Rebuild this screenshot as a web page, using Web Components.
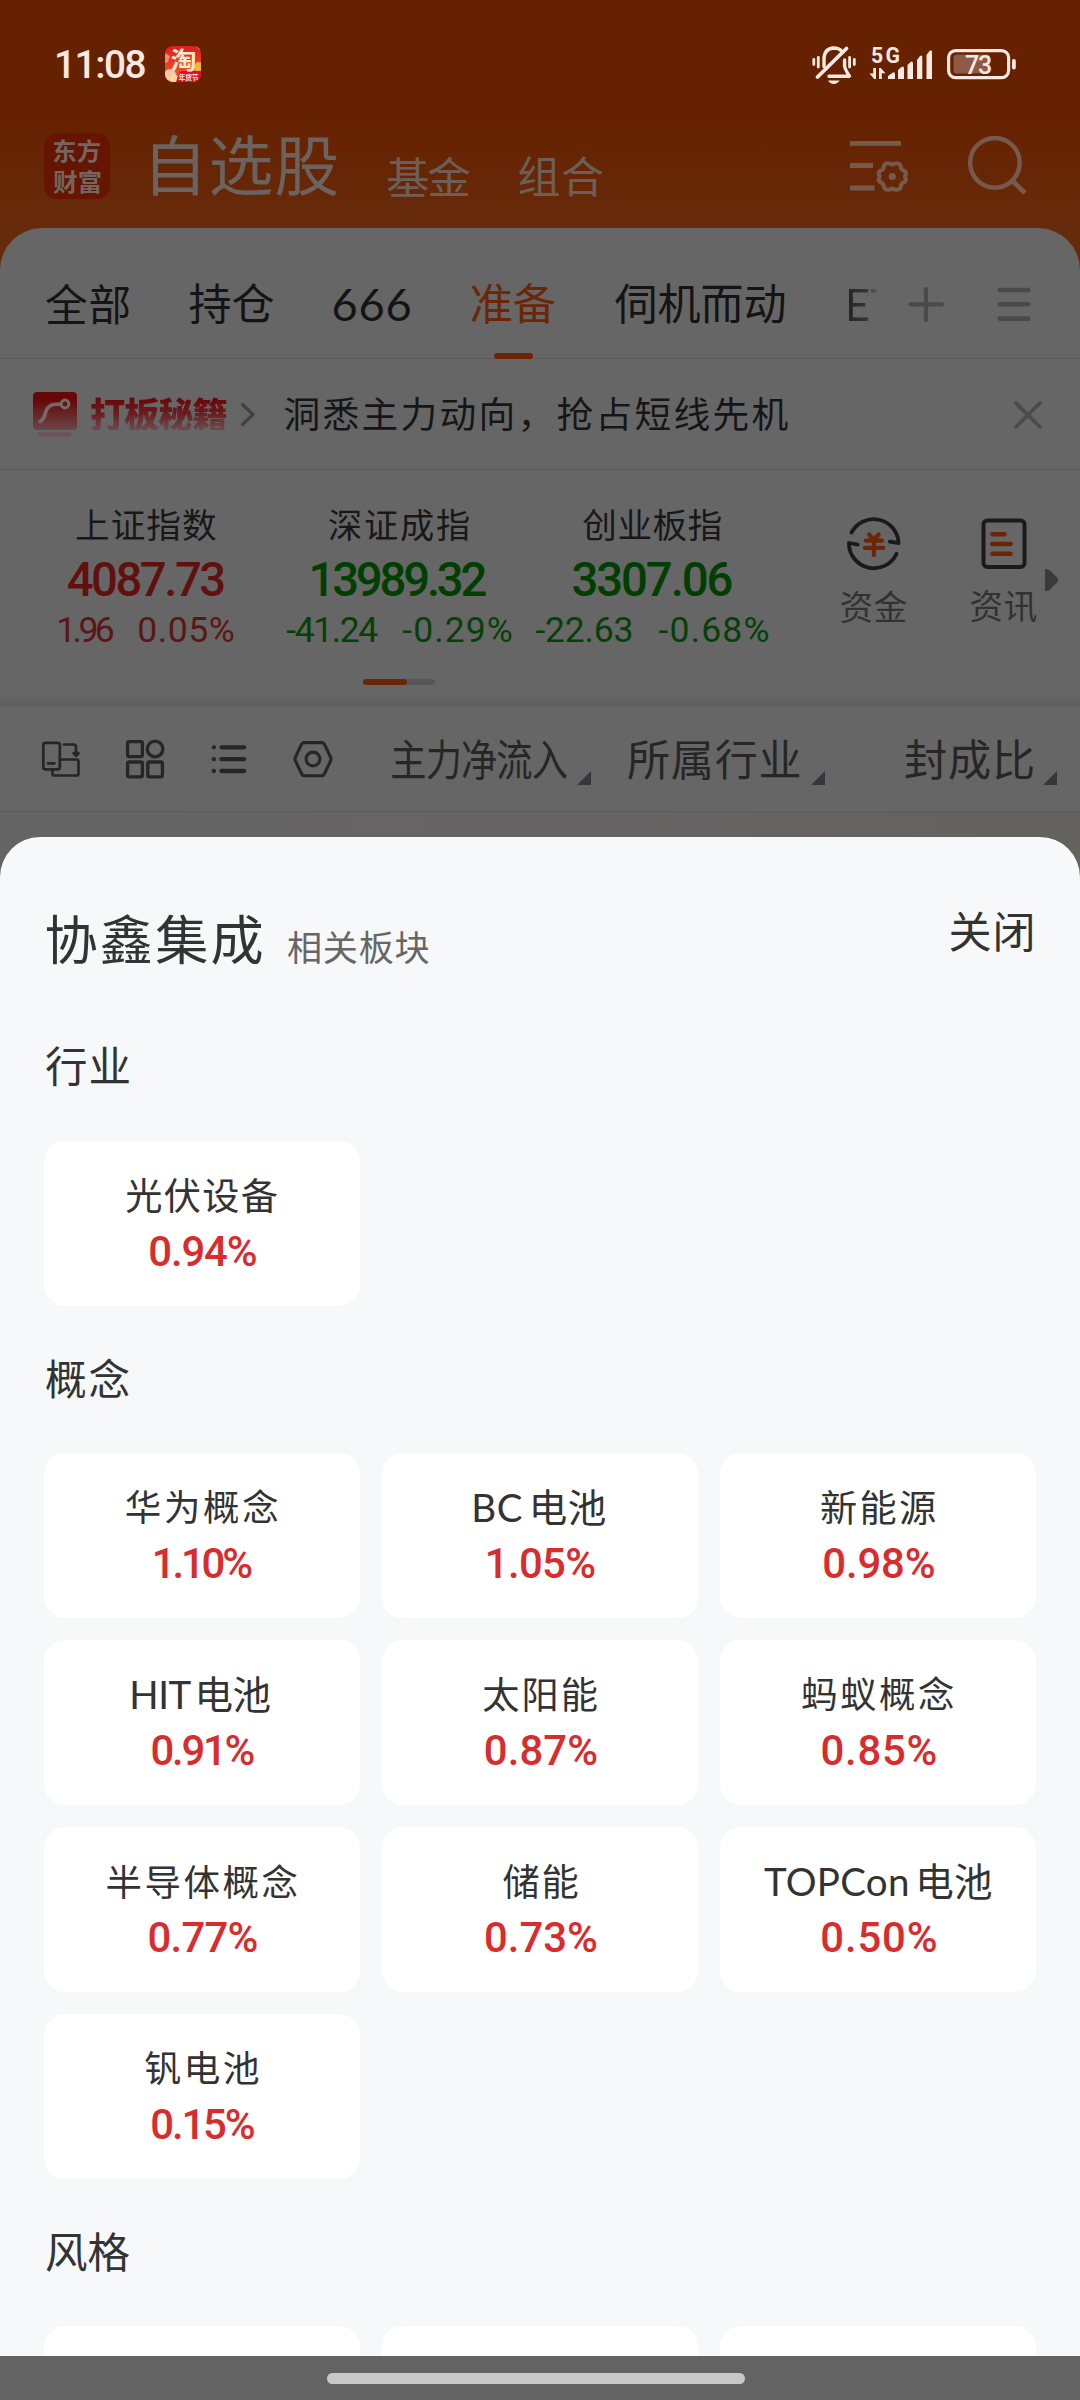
<!DOCTYPE html>
<html lang="zh-CN">
<head>
<meta charset="utf-8">
<title>自选股</title>
<style>
html,body{margin:0;padding:0}
body{width:1080px;background:#666;font-family:Lato,"Noto Sans CJK SC",sans-serif}
</style>
</head>
<body>
<app-screen></app-screen>
<script>
const define = (name, html, setup) => {
  const tpl = document.createElement('template');
  tpl.innerHTML = html;
  customElements.define(name, class extends HTMLElement {
    connectedCallback() {
      if (this.shadowRoot) return;
      const root = this.attachShadow({ mode: 'open' });
      root.appendChild(tpl.content.cloneNode(true));
      if (setup) setup(this, root);
    }
  });
};

/* Text whose box is its ink box: w and h give the size of the drawn glyphs. */
const CJK = '"Noto Sans CJK SC", sans-serif';
const LATIN = 'Lato, "Noto Sans CJK SC", sans-serif';
const NUM = 'Roboto, "Noto Sans CJK SC", sans-serif';
const ctx = document.createElement('canvas').getContext('2d');
customElements.define('ink-text', class extends HTMLElement {
  connectedCallback() {
    if (this.shadowRoot) return;
    const root = this.attachShadow({ mode: 'open' });
    const t = this.getAttribute('t');
    const w = +this.getAttribute('w'), h = +this.getAttribute('h');
    const wt = this.getAttribute('wt') || '400';
    const sx = +(this.getAttribute('sx') || 1);
    const fam = this.getAttribute('f') || (/[A-Za-z]/.test(t) ? LATIN : /[0-9]/.test(t) ? NUM : CJK);
    const measure = s => { ctx.font = `${wt} ${s}px ${fam}`; return ctx.measureText(t); };
    ctx.wordSpacing = '0px';
    let m = measure(100);
    const size = +(this.getAttribute('s') || (h / (m.actualBoundingBoxAscent + m.actualBoundingBoxDescent) * 100));
    const ws = t.includes(' ') ? -size * .12 : 0;
    ctx.wordSpacing = ws + 'px';
    m = measure(size);
    const ink = m.actualBoundingBoxLeft + m.actualBoundingBoxRight;
    const n = [...t].length;
    const ls = n > 1 ? (w / sx - ink) / (n - 1) : 0;
    const A = m.fontBoundingBoxAscent, D = m.fontBoundingBoxDescent;
    const H = m.actualBoundingBoxAscent + m.actualBoundingBoxDescent;
    const L = Math.round(size);
    const base = (L - (A + D)) / 2 + A;
    const top = m.actualBoundingBoxAscent - base;
    root.innerHTML = `<style>
      :host{display:block;flex:none;width:${w}px;height:${H}px}
      span{display:block;white-space:pre;width:max-content;font:${wt} ${size}px/${L}px ${fam};
        letter-spacing:${ls}px;word-spacing:${ws}px;text-autospace:no-autospace;text-spacing-trim:space-all;font-kerning:auto;
        transform-origin:0 0;transform:translate(${m.actualBoundingBoxLeft * sx}px,${top}px) scaleX(${sx});
        background:var(--ink-bg,none);-webkit-background-clip:text;background-clip:text}
    </style><span></span>`;
    root.querySelector('span').textContent = t;
  }
});

define('battery-level', `<style>
:host{display:grid;width:69px;height:31px;color:#fbe8e1}
svg,ink-text{grid-area:1/1}
ink-text{margin:6px 0 0 18px}
</style>
<svg width="69" height="31" viewBox="947 49 69 31"><rect x="948.6" y="50.6" width="60" height="27" rx="7" fill="none" stroke="currentColor" stroke-width="3.2"/><rect x="953.6" y="54.5" width="36.5" height="19" rx="3" fill="#8c5a45"/><rect x="1012" y="59" width="3.8" height="10.5" rx="1.8" fill="currentColor"/></svg>
<ink-text t="73" w="26" h="18.5" wt="500"></ink-text>`);

define('status-bar', `<style>
:host{display:flex;height:128px;box-sizing:border-box;padding-left:57px;align-items:flex-start;color:#fbe8e1}
.clock{margin-top:50px}.app{margin:46px 0 0 19.5px;overflow:visible}
.bell{margin:44px 0 0 609px}.net{display:block;margin:45px 0 0 11px}
.five{position:absolute;left:872px;top:47px}
battery-level{margin:49px 0 0 14px}
</style>
<ink-text class="clock" t="11:08" w="88.5" h="28.7" wt="500"></ink-text>
<svg class="app" width="36" height="36" viewBox="0 0 36 36"><defs><clipPath id="c"><rect width="36" height="36" rx="8"/></clipPath><linearGradient id="g" x1="0" y1="0" x2="0" y2="1"><stop offset="0" stop-color="#dc1f1c"/><stop offset="1" stop-color="#f4602a"/></linearGradient></defs>
<g clip-path="url(#c)"><rect width="36" height="36" fill="url(#g)"/><path d="M0 7l5 3-2 6-3 1zM30 0h6v5z" fill="#f28a7c"/><circle cx="34" cy="21" r="5" fill="#f6b24a"/><circle cx="5" cy="29" r="6" fill="#f6c8a8"/><circle cx="9" cy="33" r="4.500" fill="#f4dd90"/><path d="M11 36l3-9q1-2 3-2h19v11z" fill="#d8102a"/></g>
<text x="5.500" y="22.500" font-family="Noto Sans CJK SC" font-weight="700" font-size="24" textLength="26" lengthAdjust="spacingAndGlyphs" fill="#ffe9cf">淘</text>
<text x="13.500" y="34" font-family="Noto Sans CJK SC" font-weight="700" font-size="7" textLength="20" fill="#ffe6da">年货节</text></svg>
<svg class="bell" width="48" height="42" viewBox="810 44 48 42" fill="none" stroke="currentColor" stroke-width="3.4" stroke-linecap="round"><path d="M824 66.500V58.500Q824.500 48.500 833.700 48Q839 48 841.500 51"/><path d="M844.600 60V66Q844.800 69 849.500 76.200H829" stroke-linejoin="round"/><path d="M817.500 77L846.500 48.500" stroke-width="3.800"/><path d="M828 80.500h11.600q-2 3.400-5.800 3.400t-5.800-3.400z" fill="currentColor" stroke="none"/><path d="M813.800 59.500v5M818.300 57.500v9.500M849.600 57.500v9.500M854.300 59.500v5" stroke-width="2.800"/></svg>
<svg class="net" width="64" height="36" viewBox="870 45 64 36" fill="currentColor"><path d="M874.200 68h2.800v11h-1.800l-4.700-5.500h3.700zM880 68h1.800l4.700 5.300h-3.700v5.700H880z"/><path d="M889 79v-3l5-3.500q2-1 2 1.500v5zM899 79v-9l3.500-3q2.500-1.500 2.500 1.500v10.500zM908.500 79v-14l3-3q2.500-1.500 2.500 1.500v15.500zM918 79V60l3-4q2.300-1.500 2.300 1.500V79zM927.500 79V55l3-4q2.500-1.800 2.500 1.500V79z"/></svg>
<ink-text class="five" t="5G" w="27.500" h="15.700" wt="700" f="Roboto, sans-serif"></ink-text>
<battery-level></battery-level>`);

define('brand-logo', `<style>
:host{display:grid;justify-content:center;align-content:center;gap:5px;width:66px;height:66px;border-radius:13px;background:#661500;color:#736660}
</style><ink-text t="东方" w="47.500" h="23" s="24.300" wt="700" f="Liberation Sans, Noto Sans CJK SC, sans-serif"></ink-text><ink-text t="财富" w="47.500" h="23" s="24.300" wt="700" f="Liberation Sans, Noto Sans CJK SC, sans-serif"></ink-text>`);

define('app-header', `<style>
:host{display:flex;height:100px;align-items:flex-end;padding-left:44px;color:#6b635f}
ink-text,svg{margin-bottom:31px}
brand-logo{margin-bottom:29px}
</style>
<brand-logo></brand-logo>
<ink-text style="margin-left:42.500px" t="自选股" w="185" h="61"></ink-text>
<ink-text style="margin-left:49.500px;color:#6d5f58" t="基金" w="83.500" h="40"></ink-text>
<ink-text style="margin-left:48px;color:#6d5f58" t="组合" w="84.500" h="40.300"></ink-text>
<svg style="margin:0 0 32px 244px" width="64" height="60" viewBox="847 136 64 60" fill="none" stroke="#755b4e" stroke-width="4.800"><path d="M850 143.300h51M850 165.500h23M850 188h24.500"/><path stroke-width="4" stroke-linejoin="round" d="M885.800 163.800q3.200-1.600 6.500.9q3.300-2.500 6.500-.9q2.200 1.100 2 3.400q.3 2.400 3.400 3.700q2.100 1 1.700 3q-1.800 2.600 0 5.200q.4 2-1.700 3q-3.100 1.300-3.400 3.700q.2 2.300-2 3.400q-3.200 1.600-6.500-.9q-3.300 2.500-6.500.9q-2.200-1.100-2-3.400q-.3-2.400-3.400-3.700q-2.100-1-1.700-3q1.800-2.600 0-5.200q-.4-2 1.700-3q3.100-1.300 3.400-3.700q-.2-2.300 2-3.400z"/><circle cx="892.300" cy="176.500" r="3.600" fill="#755b4e" stroke="none"/></svg>
<svg style="margin:0 0 32px 54px" width="64" height="62" viewBox="965 134 64 62" fill="none" stroke="#755b4e" stroke-width="4.400"><circle cx="994.900" cy="162.800" r="24.800"/><path d="M1012 180.500l13 12.500" stroke-width="4.800"/></svg>`);

define('group-tabs', `<style>
:host{display:flex;height:131px;border-bottom:1.500px solid #5c5c5d;box-sizing:border-box;align-items:flex-start;padding-left:46px;color:#141414;border-radius:40px 40px 0 0}
ink-text{margin-top:55px}
.on{display:grid;justify-items:center;color:#6b2605;margin-left:61px}
.on i{width:39px;height:6px;border-radius:3px;background:#6b2605;margin-top:29px}
.more{width:28px;overflow:hidden;margin:60.500px 0 0 64px;display:flex;--ink-bg:linear-gradient(90deg,#222 0,#383838 45%,#666 66%);color:transparent}
.more ink-text{margin:0}
</style>
<ink-text t="全部" w="83.500" h="40.500"></ink-text>
<ink-text style="margin-left:60px" t="持仓" w="84" h="40.500"></ink-text>
<ink-text style="margin:60.500px 0 0 60px" t="666" w="77" h="33.500" f="Lato, sans-serif"></ink-text>
<div class="on"><ink-text t="准备" w="84" h="41"></ink-text><i></i></div>
<ink-text style="margin-left:59px" t="伺机而动" w="170" h="40.500"></ink-text>
<div class="more"><ink-text t="ET" w="48" h="32.500"></ink-text></div>
<svg style="margin:54px 0 0 29px" width="40" height="44" viewBox="906 282 40 44" stroke="#4a4a4a" stroke-width="4.200" stroke-linecap="round"><path d="M926 289v31M910.500 304.300h31.500"/></svg>
<svg style="margin:54px 0 0 49px" width="40" height="44" viewBox="995 282 40 44" stroke="#4a4a4a" stroke-width="4.600" stroke-linecap="round"><path d="M999.800 290h28.500M999.800 304.300h28.500M999.800 318.600h28.500"/></svg>`);

define('promo-banner', `<style>
:host{display:flex;height:111px;box-sizing:border-box;border-bottom:1.500px solid #5c5a5a;align-items:flex-start;padding-left:33px;color:#161616}
.tag{--ink-bg:linear-gradient(#690a0d 15%,#6a1a1c 50%,#6b484a 95%);color:transparent;margin:37.500px 0 0 14px}
</style>
<svg style="margin-top:33px" width="44" height="46" viewBox="33 392 44 46"><defs><linearGradient id="b" x1="0" y1="0" x2="0" y2="1"><stop offset=".2" stop-color="#660709"/><stop offset="1" stop-color="#6a4646"/></linearGradient></defs><rect x="33" y="392" width="44" height="38" rx="4" fill="url(#b)"/><path d="M40 421.500q4-2 5.500-9q2.500-8.500 11-8.200h3.500" fill="none" stroke="#746a6a" stroke-width="3.600" stroke-linecap="round"/><circle cx="65" cy="404" r="3.900" fill="none" stroke="#746a6a" stroke-width="3"/><rect x="38" y="432.500" width="33.500" height="4" rx="2" fill="#6a5354"/></svg>
<ink-text class="tag" t="打板秘籍" w="135.500" h="34.500" wt="900"></ink-text>
<svg style="margin:41px 0 0 11px" width="18" height="28" viewBox="238 400 18 28" fill="none" stroke="#414141" stroke-width="3.200" stroke-linecap="round" stroke-linejoin="round"><path d="M242.500 404.500L253 414.500L242.500 424.500"/></svg>
<ink-text style="margin:37px 0 0 29px" t="洞悉主力动向，抢占短线先机" w="503" h="36"></ink-text>
<svg style="margin:40px 0 0 223px" width="34" height="32" viewBox="1011 399 34 32" stroke="#4b4b4b" stroke-width="3.800" stroke-linecap="round"><path d="M1016 403l24 24M1040 403l-24 24"/></svg>`);

define('index-quote', `<style>
:host{display:grid;width:253px;justify-items:center;align-content:start;flex:none}
.row{display:flex;justify-content:space-between;align-items:center;margin-top:21px}
:host([trend=up]){--c:#611010;--d:#5b1616}:host([trend=down]){--c:#003f00;--d:#044107}
.val{color:var(--c);margin-top:19.500px}.row{color:var(--d)}
.name{color:#181818}
</style><div class="name"></div><div class="val"></div><div class="row"></div>`, (el, root) => {
  const q = a => el.getAttribute(a).split('|');
  const put = (sel, [t, w], h, wt) => root.querySelector(sel).insertAdjacentHTML('beforeend', `<ink-text t="${t}" w="${w}" h="${h}" wt="${wt}"></ink-text>`);
  put('.name', q('name'), 32.5, 400);
  put('.val', q('value'), 35, 500);
  put('.row', q('diff'), 26.3, 400);
  put('.row', q('rate'), 26.3, 400);
  root.querySelector('.row').style.width = el.getAttribute('span') + 'px';
});

define('quick-link', `<style>
:host{display:grid;justify-items:center;align-content:start;width:66px;flex:none;color:#323232}
slot{display:block}ink-text{margin-top:18px}
</style><slot></slot>`, (el, root) => {
  const n = document.createElement('ink-text');
  n.setAttribute('t', el.getAttribute('label')); n.setAttribute('w', 66); n.setAttribute('h', 32);
  root.appendChild(n);
});

define('index-strip', `<style>
:host{display:grid;height:237px;box-sizing:border-box;border-bottom:10.500px solid #616161;grid-template-rows:209px 6px;align-content:start}
.row{display:flex;padding:38px 0 0 19.500px}
.dots{width:72px;height:6px;border-radius:3px;background:#55575a;margin-left:363px}
.dots i{display:block;width:44px;height:6px;border-radius:3px;background:#6b2605}
quick-link{margin:6px 0 0 62px}
quick-link + quick-link{margin-left:64px}
svg{display:block}
</style>
<div class="row">
<index-quote trend="up" name="上证指数|140" value="4087.73|156.500" diff="1.96|55.500" rate="0.05%|94.500" span="175.500"></index-quote>
<index-quote trend="down" name="深证成指|140" value="13989.32|175" diff="-41.24|92" rate="-0.29%|109.500" span="225.500"></index-quote>
<index-quote trend="down" name="创业板指|139.500" value="3307.06|159" diff="-22.63|96" rate="-0.68%|110" span="233"></index-quote>
<quick-link label="资金"><svg width="58" height="58" viewBox="844.700 514 58 58" fill="none" stroke="#1a1a1a" stroke-width="3.800" stroke-linecap="round" stroke-linejoin="round"><path d="M851.200 532.500A25 25 0 0 1 898.300 543L889.500 541.600M896.300 553.700A25 25 0 0 1 848.600 543L857.500 544.600"/><path stroke="#6b2605" stroke-width="4.200" d="M868.800 534.500l4.800 5.500 4.800-5.500M865.500 540.700h16M864.500 547.800h18.500M873.600 541v14"/></svg></quick-link>
<quick-link label="资讯"><svg width="58" height="58" viewBox="974.500 514 58 58" fill="none" stroke-linecap="round"><rect x="983" y="520.500" width="41" height="46.500" rx="4" stroke="#1a1a1a" stroke-width="4"/><path stroke="#6b2605" stroke-width="4.600" d="M992 534.300h12M992 544h18M992 553.800h18"/></svg></quick-link>
<svg style="margin:60px 0 0 7px" width="16" height="24" viewBox="1044 568 16 24"><path d="M1045 569q3-.5 5 1.500l7.500 7.500q1.500 2 0 4l-7.500 7.500q-2 2-5 1.500z" fill="#3a3a3a"/></svg>
</div>
<div class="dots"><i></i></div>`);

define('sort-column', `<style>
:host{display:flex;flex:none;align-items:flex-start;color:#262626}
ink-text{margin-top:32px}
svg{margin:64px 0 0 var(--gap,10px)}
</style><svg width="14" height="14" viewBox="0 0 14 14"><path d="M14 0V14H0z" fill="#37373a"/></svg>`, (el, root) => {
  const n = document.createElement('ink-text');
  for (const a of ['t', 'w', 'h', 'sx']) if (el.hasAttribute(a)) n.setAttribute(a, el.getAttribute(a));
  root.insertBefore(n, root.querySelector('svg'));
});

define('tool-row', `<style>
:host{display:flex;height:105px;box-sizing:border-box;border-bottom:1.500px solid #5b5b5b;align-items:flex-start;padding-left:40px}
svg{margin-top:30px;flex:none}
</style>
<svg width="42" height="44" viewBox="40 737 42 44" fill="none" stroke="#262626" stroke-width="2.700" stroke-linecap="round" stroke-linejoin="round"><rect x="43.300" y="742.800" width="16.500" height="26.500" rx="2"/><path d="M60 759.500h16.500q2 0 2 2v12q0 2-2 2h-22q-2 0-2-2v-4"/><path d="M48 763.300h6.500M64 744.500h9.500q2.500 0 2.500 2.500v7"/><path d="M73.500 753h5l-2.500 2.800z" fill="#262626"/></svg>
<svg style="margin-left:42px" width="42" height="44" viewBox="124 737 42 44" fill="none" stroke="#262626" stroke-width="3.300"><rect x="127.600" y="741.600" width="14.800" height="15" rx="1.500"/><circle cx="155.100" cy="749" r="7.800"/><rect x="127.600" y="762" width="14.800" height="14.800" rx="1.500"/><rect x="147.800" y="762" width="14.600" height="14.800" rx="1.500"/></svg>
<svg style="margin-left:42px" width="42" height="44" viewBox="208 737 42 44" fill="none" stroke="#262626" stroke-width="4.300" stroke-linecap="round"><path d="M221.500 747.300h22.700M221.500 759.200h22.700M221.500 771h22.700M213.800 747.300h.1M213.800 759.200h.1M213.800 771h.1"/></svg>
<svg style="margin-left:42px" width="42" height="44" viewBox="292 737 42 44" fill="none" stroke="#262626" stroke-width="3.100" stroke-linejoin="round"><path d="M304.500 742.600h17q2 0 3 1.700l6 12.700q1 2 0 4l-6 12.700q-1 2-3 2h-17q-2 0-3-2l-6-12.700q-1-2 0-4l6-12.700q1-1.700 3-1.700z"/><circle cx="313" cy="759" r="6.900"/></svg>
<sort-column style="margin-left:58px" t="主力净流入" w="175" h="40.500" sx=".84"></sort-column>
<sort-column style="margin-left:37px;--gap:11px" t="所属行业" w="171.500" h="40.500"></sort-column>
<sort-column style="margin-left:80.500px" t="封成比" w="128" h="41"></sort-column>`);

define('board-card', `<style>
:host{display:grid;height:165px;border-radius:21px;background:#fff;justify-items:center;align-content:start;box-sizing:border-box}
.n{height:36px;margin-top:36px;display:flex;align-items:center;color:#333}
.v{height:31px;margin-top:22px;padding-left:2px;display:flex;align-items:center;color:#d92c2c}
</style><div class="n"></div><div class="v"></div>`, (el, root) => {
  if (!el.hasAttribute('name')) return;
  const [n, nw] = el.getAttribute('name').split('|'), [v, vw] = el.getAttribute('value').split('|');
  root.querySelector('.n').innerHTML = `<ink-text t="${n}" w="${nw}" h="35" ${/[A-Z]/.test(n) ? 's="38.5"' : ''}></ink-text>`;
  root.querySelector('.v').innerHTML = `<ink-text t="${v}" w="${vw}" h="31" wt="500"></ink-text>`;
});

define('board-section', `<style>
:host{display:block}
header{height:147px;display:flex;align-items:flex-start;padding-left:46px;color:#333}
header div{height:40px;margin-top:52.500px;display:flex;align-items:center}
.grid{display:grid;grid-template-columns:repeat(3,1fr);gap:22px;padding:0 44px}
</style><header><div></div></header><div class="grid"><slot></slot></div>`, (el, root) => {
  root.querySelector('header div').innerHTML = `<ink-text t="${el.getAttribute('title')}" w="83.500" h="40"></ink-text>`;
});

define('board-sheet', `<style>
:host{display:block;height:1519px;overflow:hidden;border-radius:40px 40px 0 0;background:#f7f8fa;color:#333}
.head{display:flex;height:157px;align-items:flex-start;padding-left:46.500px}
</style>
<div class="head">
<ink-text style="margin-top:77px" t="协鑫集成" w="215" h="51"></ink-text>
<ink-text style="margin:93px 0 0 26.500px;color:#666" t="相关板块" w="140.500" h="33"></ink-text>
<ink-text style="margin:74px 0 0 522px" t="关闭" w="82" h="40.500"></ink-text>
</div>
<board-section title="行业"><board-card name="光伏设备|151.500" value="0.94%|105.500"></board-card></board-section>
<board-section title="概念">
<board-card name="华为概念|152.500" value="1.10%|96.500"></board-card>
<board-card name="BC 电池|131.500" value="1.05%|106.500"></board-card>
<board-card name="新能源|114" value="0.98%|109.500"></board-card>
<board-card name="HIT 电池|139.500" value="0.91%|101"></board-card>
<board-card name="太阳能|113.500" value="0.87%|110.500"></board-card>
<board-card name="蚂蚁概念|152" value="0.85%|113"></board-card>
<board-card name="半导体概念|191" value="0.77%|107"></board-card>
<board-card name="储能|75" value="0.73%|110"></board-card>
<board-card name="TOPCon 电池|228" value="0.50%|113.500"></board-card>
<board-card name="钒电池|113.500" value="0.15%|101.500"></board-card>
</board-section>
<board-section title="风格"><board-card></board-card><board-card></board-card><board-card></board-card></board-section>`);

define('gesture-bar', `<style>
:host{display:flex;height:44px;background:#636363;justify-content:center;align-items:flex-start;padding-right:8px}
i{width:418px;height:11px;border-radius:6px;background:#c9c9c9;margin-top:17px}
</style><i></i>`);

define('app-screen', `<style>
:host{display:block;width:1080px;height:2400px;overflow:hidden;background:#666}
.top{background:linear-gradient(#662200 0,#662200 118px,#662b0b 230px,#662b0b 100%);height:228px;padding-bottom:45px;margin-bottom:-45px}
.panel{background:#666;border-radius:42px 42px 0 0;height:583px;position:relative}
.under{padding-top:26px;background:linear-gradient(90deg,#646464 0,#646464 15%,#666364 45%,#666364 60%,#64625f 92%)}
</style>
<div class="top"><status-bar></status-bar><app-header></app-header></div>
<div class="panel"><group-tabs></group-tabs><promo-banner></promo-banner><index-strip></index-strip><tool-row></tool-row></div>
<div class="under"><board-sheet></board-sheet></div>
<gesture-bar></gesture-bar>`);
</script>
</body>
</html>
